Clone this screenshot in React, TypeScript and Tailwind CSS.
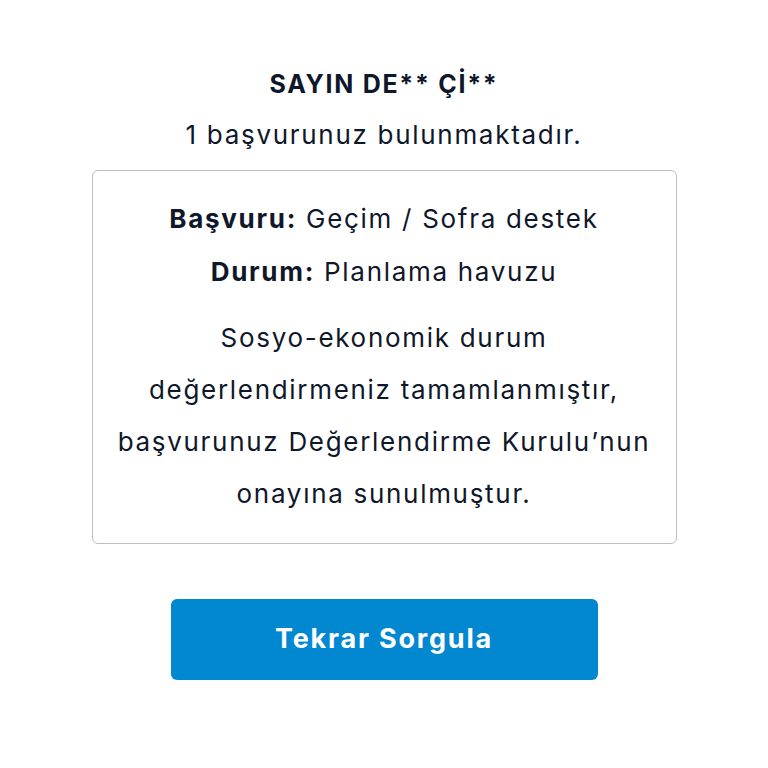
export default function App() {
  return (
    <div className="min-h-screen bg-white flex flex-col items-center pt-[64px] text-[#0f172a] [font-family:Inter,'Noto_Sans',sans-serif]">
      <h1 className="text-[25px] font-bold leading-[40px] tracking-[1.7px]">SAYIN DE** Çİ**</h1>
      <p className="mt-[11px] text-[26px] leading-[40px] tracking-[1.7px]">1 başvurunuz bulunmaktadır.</p>

      <div className="mt-[15px] w-[585px] rounded-[6px] border border-[#bdbdbd] px-4 pt-[21px] pb-[23px] text-center text-[26px] tracking-[1.7px]">
        <p className="leading-[53px]">
          <span className="font-bold">Başvuru:</span> Geçim / Sofra destek
        </p>
        <p className="leading-[53px]">
          <span className="font-bold">Durum:</span> Planlama havuzu
        </p>
        <p className="mt-[14px] leading-[52px]">
          Sosyo-ekonomik durum
          <br />
          değerlendirmeniz tamamlanmıştır,
          <br />
          başvurunuz Değerlendirme Kurulu’nun
          <br />
          onayına sunulmuştur.
        </p>
      </div>

      <button className="mt-[55px] w-[427px] h-[81px] rounded-[6px] bg-[#0288d1] text-white text-[27px] font-bold tracking-[1.8px]">
        Tekrar Sorgula
      </button>
    </div>
  );
}
